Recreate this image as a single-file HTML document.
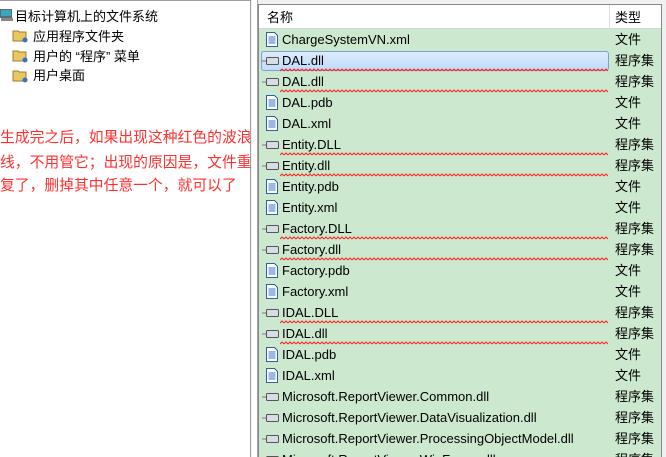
<!DOCTYPE html>
<html><head><meta charset="utf-8"><style>
*{margin:0;padding:0;box-sizing:border-box}
body{width:666px;height:457px;overflow:hidden;background:#f0f0f0;font-family:"Liberation Sans","Noto Sans CJK SC",sans-serif;font-size:13px;line-height:17px;color:#000;position:relative}
#left{position:absolute;left:0;top:0;width:251px;height:457px;background:#fff;border-right:1px solid #a0a0a0;border-top:1px solid #a0a0a0}
#gap{position:absolute;left:252px;top:0;width:6px;height:457px;background:#fff;border-right:1px solid #a0a0a0}
#right{position:absolute;left:258px;top:4px;width:404px;height:453px;background:#cce8cf;border-left:1px solid #888;border-top:1px solid #888;border-right:1px solid #888;overflow:hidden}
.t{position:absolute;white-space:nowrap}
.red{position:absolute;left:0;color:#ff3030;font-size:14.8px;line-height:18px;white-space:nowrap}
#hdr{position:absolute;left:0;top:0;width:404px;height:24px;background:#fff;border-bottom:1px solid #d5d5d5}
.row{position:absolute;left:0;width:404px;height:21px}
.nm{position:absolute;left:23px;top:2px;white-space:nowrap;line-height:17px}
.ty{position:absolute;left:356px;top:2px;line-height:17px}
.sel{position:absolute;left:2px;top:1px;width:348px;height:20px;border:1px solid #7da2ce;border-radius:3px;background:linear-gradient(#dcebfc,#c1dbfc)}
.ic{position:absolute;left:7px;top:3px}
.wv{position:absolute;left:21px;top:18px}
</style></head><body>
<div id="left">
 <svg class="t" style="left:0;top:7px" width="14" height="14"><rect x="0" y="1" width="12" height="9" fill="#5a6a7a"/><rect x="1" y="2" width="10" height="6" fill="#3aa7b8"/><rect x="1" y="10" width="12" height="3" fill="#888"/></svg>
 <div class="t" style="left:15px;top:7px">目标计算机上的文件系统</div>
 <svg class="t" style="left:12px;top:27px" width="18" height="15"><path d="M1 3h5l1 1h7v9H1z" fill="#e8c860" stroke="#a08030"/><circle cx="13" cy="12" r="2.5" fill="#3a70c0"/></svg>
 <div class="t" style="left:33px;top:27px">应用程序文件夹</div>
 <svg class="t" style="left:12px;top:47px" width="18" height="15"><path d="M1 3h5l1 1h7v9H1z" fill="#e8c860" stroke="#a08030"/><circle cx="13" cy="12" r="2.5" fill="#3a70c0"/></svg>
 <div class="t" style="left:33px;top:47px">用户的 “程序” 菜单</div>
 <svg class="t" style="left:12px;top:67px" width="18" height="15"><path d="M1 3h5l1 1h7v9H1z" fill="#e8c860" stroke="#a08030"/><circle cx="13" cy="12" r="2.5" fill="#3a70c0"/></svg>
 <div class="t" style="left:33px;top:66px">用户桌面</div>
 <div class="red" style="top:128px">生成完之后，如果出现这种红色的波浪</div>
 <div class="red" style="top:153px">线，不用管它；出现的原因是，文件重</div>
 <div class="red" style="top:176px">复了，删掉其中任意一个，就可以了</div>
</div>
<div id="gap"></div>
<div id="right">
 <div id="hdr"><div class="t" style="left:8px;top:4px">名称</div><div style="position:absolute;left:350px;top:0;width:1px;height:24px;background:#ddd"></div><div class="t" style="left:356px;top:4px">类型</div></div>
 <svg width="0" height="0" style="position:absolute"><defs>
  <pattern id="wz" width="4" height="4" patternUnits="userSpaceOnUse"><path d="M0 3L2 1L4 3" fill="none" stroke="#ff2020" stroke-width="1"/></pattern>
  <symbol id="fi" viewBox="0 0 12 15"><path d="M0.5 0.5h8l3 3v11h-11z" fill="#fff" stroke="#3060a0"/><path d="M2.5 5h7M2.5 7h7M2.5 9h7M2.5 11h7" stroke="#3a70c8"/></symbol>
  <symbol id="dl" viewBox="0 0 18 10"><path d="M0 5h4" stroke="#777"/><rect x="4.5" y="1.5" width="12" height="7" rx="1" fill="#d8dce4" stroke="#555"/></symbol>
 </defs></svg>
 <div id="rows"></div>
</div>
<script>
var items=[["ChargeSystemVN.xml","f"],["DAL.dll","d",1],["DAL.dll","d"],["DAL.pdb","f"],["DAL.xml","f"],["Entity.DLL","d"],["Entity.dll","d"],["Entity.pdb","f"],["Entity.xml","f"],["Factory.DLL","d"],["Factory.dll","d"],["Factory.pdb","f"],["Factory.xml","f"],["IDAL.DLL","d"],["IDAL.dll","d"],["IDAL.pdb","f"],["IDAL.xml","f"],["Microsoft.ReportViewer.Common.dll","m"],["Microsoft.ReportViewer.DataVisualization.dll","m"],["Microsoft.ReportViewer.ProcessingObjectModel.dll","m"],["Microsoft.ReportViewer.WinForms.dll","m"]];
var h="";
items.forEach(function(it,i){
 var top=24+i*21;
 h+='<div class="row" style="top:'+top+'px">';
 if(it[2])h+='<div class="sel"></div>';
 if(it[1]=="f")h+='<svg class="ic" width="12" height="15"><use href="#fi"/></svg>';
 else h+='<svg style="position:absolute;left:3px;top:6px" width="18" height="10"><use href="#dl"/></svg>';
 h+='<div class="nm">'+it[0]+'</div>';
 if(it[1]=="d")h+='<svg class="wv" width="328" height="4"><rect width="328" height="4" fill="url(#wz)"/></svg>';
 h+='<div class="ty">'+(it[1]=="f"?"文件":"程序集")+'</div></div>';
});
document.getElementById("rows").innerHTML=h;
</script>
</body></html>
